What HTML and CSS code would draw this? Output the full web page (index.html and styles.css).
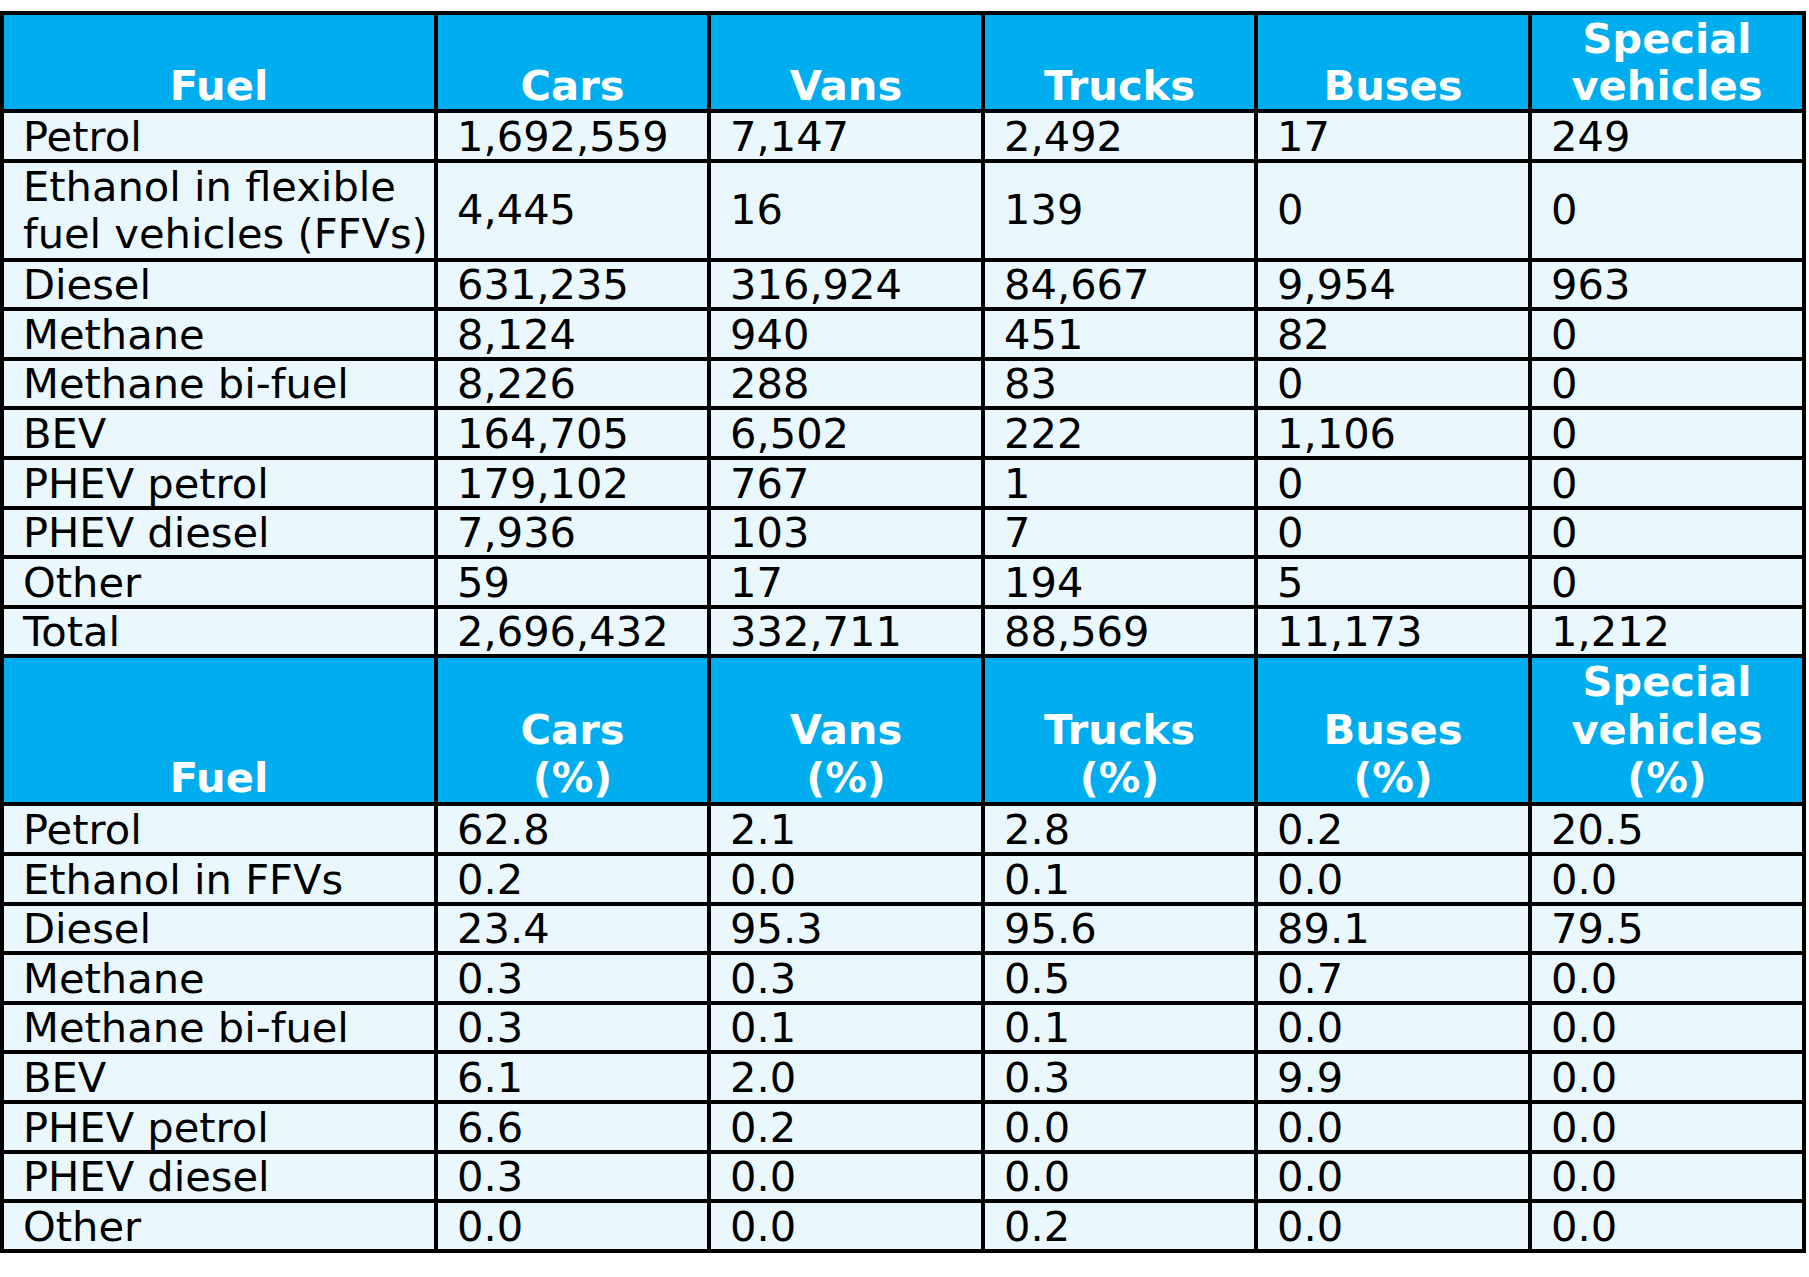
FILE: index.html
```html
<!DOCTYPE html>
<html lang="en">
<head>
<meta charset="utf-8">
<title>Vehicle fleet by fuel</title>
<link rel="stylesheet" href="styles.css">
</head>
<body>
<div class="page">
<table class="fleet">
  <colgroup>
    <col class="c-fuel"><col class="c-cars"><col class="c-num"><col class="c-num3"><col class="c-num"><col class="c-num">
  </colgroup>
  <tr class="head head-1">
    <th>Fuel</th><th>Cars</th><th>Vans</th><th>Trucks</th><th>Buses</th><th>Special<br>vehicles</th>
  </tr>
  <tr><td>Petrol</td><td>1,692,559</td><td>7,147</td><td>2,492</td><td>17</td><td>249</td></tr>
  <tr class="tall"><td>Ethanol in flexible fuel vehicles (FFVs)</td><td>4,445</td><td>16</td><td>139</td><td>0</td><td>0</td></tr>
  <tr><td>Diesel</td><td>631,235</td><td>316,924</td><td>84,667</td><td>9,954</td><td>963</td></tr>
  <tr><td>Methane</td><td>8,124</td><td>940</td><td>451</td><td>82</td><td>0</td></tr>
  <tr><td>Methane bi-fuel</td><td>8,226</td><td>288</td><td>83</td><td>0</td><td>0</td></tr>
  <tr><td>BEV</td><td>164,705</td><td>6,502</td><td>222</td><td>1,106</td><td>0</td></tr>
  <tr><td>PHEV petrol</td><td>179,102</td><td>767</td><td>1</td><td>0</td><td>0</td></tr>
  <tr><td>PHEV diesel</td><td>7,936</td><td>103</td><td>7</td><td>0</td><td>0</td></tr>
  <tr><td>Other</td><td>59</td><td>17</td><td>194</td><td>5</td><td>0</td></tr>
  <tr><td>Total</td><td>2,696,432</td><td>332,711</td><td>88,569</td><td>11,173</td><td>1,212</td></tr>
  <tr class="head head-2">
    <th>Fuel</th><th>Cars<br>(%)</th><th>Vans<br>(%)</th><th>Trucks<br>(%)</th><th>Buses<br>(%)</th><th>Special<br>vehicles<br>(%)</th>
  </tr>
  <tr><td>Petrol</td><td>62.8</td><td>2.1</td><td>2.8</td><td>0.2</td><td>20.5</td></tr>
  <tr><td>Ethanol in FFVs</td><td>0.2</td><td>0.0</td><td>0.1</td><td>0.0</td><td>0.0</td></tr>
  <tr><td>Diesel</td><td>23.4</td><td>95.3</td><td>95.6</td><td>89.1</td><td>79.5</td></tr>
  <tr><td>Methane</td><td>0.3</td><td>0.3</td><td>0.5</td><td>0.7</td><td>0.0</td></tr>
  <tr><td>Methane bi-fuel</td><td>0.3</td><td>0.1</td><td>0.1</td><td>0.0</td><td>0.0</td></tr>
  <tr><td>BEV</td><td>6.1</td><td>2.0</td><td>0.3</td><td>9.9</td><td>0.0</td></tr>
  <tr><td>PHEV petrol</td><td>6.6</td><td>0.2</td><td>0.0</td><td>0.0</td><td>0.0</td></tr>
  <tr><td>PHEV diesel</td><td>0.3</td><td>0.0</td><td>0.0</td><td>0.0</td><td>0.0</td></tr>
  <tr><td>Other</td><td>0.0</td><td>0.0</td><td>0.2</td><td>0.0</td><td>0.0</td></tr>
</table>
</div>
</body>
</html>
```

FILE: styles.css
```css
html, body {
  margin: 0;
  padding: 0;
  background: #ffffff;
}

.page {
  padding-top: 11px;
}

.fleet {
  border-collapse: collapse;
  table-layout: fixed;
  width: 1806px;
  font-family: "DejaVu Sans", Verdana, sans-serif;
  font-size: 41.6px;
  color: #000000;
}

.c-fuel { width: 434px; }
.c-cars { width: 273px; }
.c-num { width: 274px; }
.c-num3 { width: 273px; }

.fleet td,
.fleet th {
  border: 4px solid #000000;
  padding: 1.6px 4px 0 19px;
  line-height: 44px;
  text-align: left;
  vertical-align: middle;
  background: #eaf8fe;
  white-space: nowrap;
}

.fleet .tall td {
  padding: 0 4px 0 19px;
  line-height: 47.5px;
  white-space: normal;
}

.fleet .head th {
  background: #00aeef;
  color: #ffffff;
  font-weight: bold;
  text-align: center;
  vertical-align: bottom;
  padding: 0 2px;
}

.fleet .head-1 th {
  line-height: 47px;
}

.fleet .head-2 th {
  line-height: 48px;
}
```
